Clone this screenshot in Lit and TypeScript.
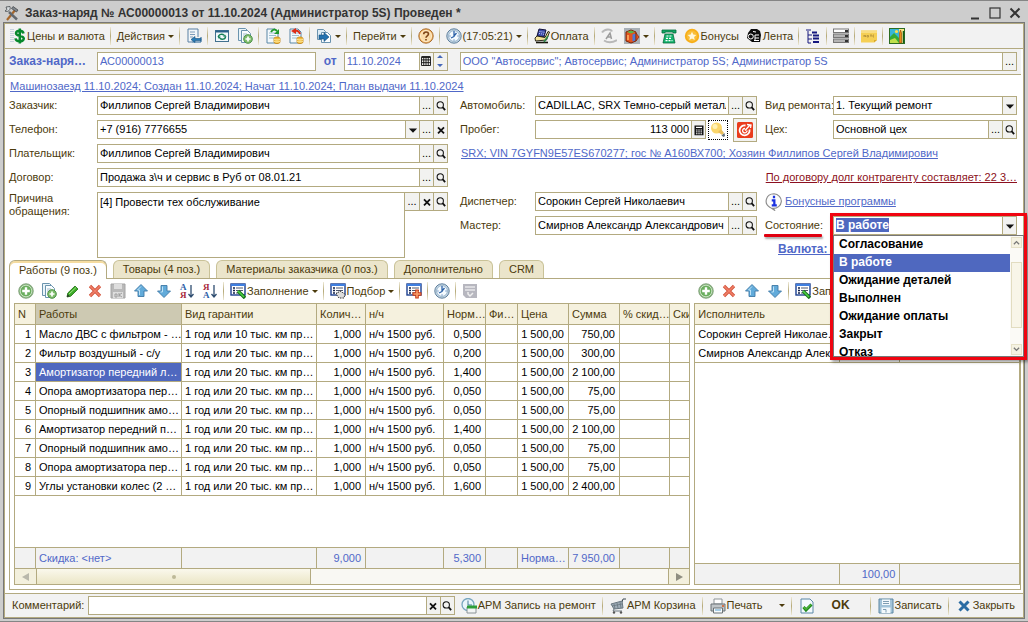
import { LitElement, html, css, svg, nothing } from "lit";
import { customElement, property } from "lit/decorators.js";
import { classMap } from "lit/directives/class-map.js";

const listLines = svg`
  <rect x="1" y="1" width="14" height="11" fill="#fff" stroke="#1c3f8f" stroke-width="1.4"/>
  <rect x="1" y="1" width="14" height="2" fill="#3f7fe0"/>
  <path d="M3 5h2M3 7.5h2M3 10h2" stroke="#10204a" stroke-width="1.4"/>
  <path d="M6 5h7M6 7.5h7M6 10h5" stroke="#50586c" stroke-width="1.1"/>`;
const sheet = svg`
  <path d="M2 1h8l3 3v11H2z" fill="#f4f9fc" stroke="#5a87a6"/>
  <path d="M4 5h6M4 7.500h7M4 10h6" stroke="#9dbdd0"/>`;
const clockFace = svg`
  <circle cx="8" cy="8" r="7.200" fill="#c8d8e6" stroke="#5d7f9c"/>
  <circle cx="8" cy="8" r="5.400" fill="#f5fbff" stroke="#86a7c0" stroke-width=".8"/>
  <path d="M8 3v6M8 8.500L5 10M8 8l2.500-3" stroke="#2d62a8" stroke-width="1.300" fill="none"/>
  <path d="M12.500 8h-1M3.500 8h1M8 12.500v-1" stroke="#2d62a8"/>`;
const coins = svg`
  <path d="M9 10.500c0-2 6-2 6 0v3.500c0 2-6 2-6 0z" fill="#f2b93b" stroke="#c58512" stroke-width=".8"/>
  <path d="M9 11c1 1.300 5 1.300 6 0M9 13c1 1.300 5 1.300 6 0" stroke="#fff0a8" fill="none"/>`;

const icons: Record<string, unknown> = {
  tools: svg`
    <path d="M3 15L12 4" stroke="#a8672a" stroke-width="2.200"/>
    <path d="M9 1.500l5 3.500-1.500 2-5-3.500z" fill="#7f868c" stroke="#3b3f43" stroke-width=".7"/>
    <path d="M5 7l8 7.500" stroke="#62686e" stroke-width="2.400"/>
    <path d="M6 1.500C7 5 4 7.500 1 6l2-1.500L2 2z" fill="#d9dee2" stroke="#44494d" stroke-width=".8"/>`,
  prices: svg`
    <path d="M1 1v14M3 1v14" stroke="#9cb4c8" stroke-dasharray="1 1"/>
    <path d="M13.500 5.500C13 1.800 6 2 6 5.200c0 3.300 7.800 2 7.800 5.300C13.800 14.200 6 14.200 5.500 10.300M9.800.500v15" stroke="#06882c" stroke-width="2.500" fill="none"/>`,
  listIn: svg`
    <path d="M2 1h10v8M2 1v13h4" fill="#f2f7fb" stroke="#5b80a3"/>
    <path d="M4 4h5M4 6.500h5M4 9h3" stroke="#7c9cba"/>
    <path d="M15 14H6M15 9v5" stroke="#1c5f94" fill="none"/>
    <path d="M5 11.500l4-3v2h6v2H9v2z" fill="#2a7db8" stroke="#14517f" stroke-width=".6"/>`,
  refresh: svg`
    <rect x="1.500" y="2.500" width="13" height="11" fill="#f3f8fb" stroke="#42718f"/>
    <path d="M1.500 3.500h13" stroke="#2b6289" stroke-width="2"/>
    <path d="M4.500 9c0-3 4-3.500 5.500-1.700M11.500 8.500c0 3-4 3.500-5.500 1.700" stroke="#168056" stroke-width="1.400" fill="none"/>
    <path d="M12.500 8.800L9 8.500l2-2zM3.500 8.500l3.500.300-2 2.200z" fill="#168056"/>`,
  copyAdd: svg`
    <path d="M1.500.500h7l2 2v10h-9z" fill="#eaf4f9" stroke="#6b94ae"/>
    <path d="M4.500 2.500h6l3 3v9h-9z" fill="#fafdff" stroke="#6b94ae"/>
    <path d="M6 6h4M6 8h3" stroke="#a3bccb"/>
    <circle cx="11" cy="11" r="4.300" fill="#7fbd6c" stroke="#4d9248"/>
    <path d="M11 8.500v5M8.500 11h5" stroke="#fff" stroke-width="1.700"/>`,
  docIn: svg`${sheet}${coins}<path d="M6 4c2-3 4-3 6-1" stroke="#1f9a2c" stroke-width="2" fill="none"/><path d="M14 1v5H9z" fill="#1f9a2c"/>`,
  docOut: svg`${sheet}${coins}<path d="M12 6c-1-3-3-3.500-5-3" stroke="#dc2d18" stroke-width="2" fill="none"/><path d="M3 3l5-3v6z" fill="#dc2d18"/>`,
  goto: svg`
    <path d="M1.500 1.500h6l2 2v8h-8z" fill="#dcebf5" stroke="#6a92ae"/>
    <path d="M5.500 4.500h6l3 3v7h-9z" fill="#fafdff" stroke="#6a92ae"/>
    <path d="M3 7h5V4.500L13 9l-5 4.500V11H3z" fill="#2472b0" stroke="#164e7c" stroke-width=".6"/>`,
  help: svg`
    <circle cx="8" cy="8" r="7.200" fill="#f4b765" stroke="#a86e33"/>
    <circle cx="8" cy="8" r="5.600" fill="#fbdca9" stroke="#fff1d6" stroke-width=".8"/>
    <path d="M5.700 6.300c0-3 4.800-3 4.800-.300C10.500 8 8 7.800 8 9.800M8 11v1.600" stroke="#80471a" stroke-width="1.600" fill="none"/>`,
  clock: clockFace,
  cash: svg`
    <path d="M5 1l7 1-2 7-7-1z" fill="#3a49a8" stroke="#14143c"/>
    <path d="M5.500 3.500l5 .8M5 5.500l5 .8" stroke="#c9d4ff" stroke-dasharray="1 1"/>
    <path d="M1 10l2-2 8 1.500 3-6 1.500.500-3 8-11 1z" fill="#f3e39a" stroke="#17150c" stroke-width=".9"/>
    <path d="M2 14.500h12" stroke="#17150c" stroke-width="1.600"/>
    <path d="M10 14l4-6" stroke="#2d8748" stroke-width="1.500"/>`,
  fontGray: svg`
    <path d="M1 4.500c3-4 9-3.500 10-1M3 12.500c4 2.500 9 2 13-.500" stroke="#b8b8b8" stroke-width="2" fill="none"/>
    <path d="M5 11l4-6 1.500 6M6.500 9h4" stroke="#9c9c9c" stroke-width="1.500" fill="none"/>`,
  book: svg`
    <rect width="16" height="16" fill="#a9b0b6"/>
    <path d="M2 4l5-2 5 2v9l-5 2-5-2z" fill="#e2541e" stroke="#7c2508"/>
    <path d="M3 4l4-1.500L11 4 7 5.500z" fill="#54b84a"/>
    <path d="M8.500 6.500v7l3-1V5.500z" fill="#4b79d6"/><path d="M4 7v5" stroke="#ffb469" stroke-width="1.500"/>
    <path d="M12 5l3 4-3 4z" fill="#e2541e" stroke="#7c2508" stroke-width=".7"/>`,
  phone: svg`
    <path d="M1 5V2h14v3h-3V4H4v1z" fill="#12a865" stroke="#056b3b" stroke-width=".8"/>
    <path d="M4 6h8l2 9H2z" fill="#15b36d" stroke="#056b3b" stroke-width=".8"/>
    <path d="M5.500 8h5M5 10.300h6M4.500 12.700h7" stroke="#fff" stroke-width="1.200" stroke-dasharray="2 1"/>`,
  star: svg`
    <circle cx="8" cy="8" r="7.200" fill="#f7ae18"/><circle cx="8" cy="8" r="5.400" fill="#f9bd38"/>
    <path d="M8 3.800l1.300 2.800 3 .300-2.200 2.100.600 3L8 10.500 5.300 12l.600-3L3.700 6.900l3-.300z" fill="#fff7dc"/>`,
  tape: svg`
    <path d="M5 1h6l3 2 1 4-1 7H6l-5-4 1-5z" fill="#0c0c0c"/>
    <circle cx="4.800" cy="8.500" r="2.500" fill="none" stroke="#fff"/>
    <path d="M9 7h4M9 10h4M8 12.500h5M9 7v5M7 3.500l3 .5" stroke="#fff"/>`,
  tree: svg`
    <path d="M1 2h5M3 3v12h3M3 7h4M3 11h4" stroke="#16187e" fill="none"/>
    <path d="M7 4.500h5M8 7.500h6M8 10.500h6M8 14h6" stroke="#16187e" stroke-width="2"/>`,
  rows: svg`
    <rect x=".5" y="1" width="15" height="3.500" fill="#fff" stroke="#777"/><rect x=".5" y="6" width="15" height="3.500" fill="#b4b4b4" stroke="#777"/><rect x=".5" y="11" width="15" height="3.500" fill="#b4b4b4" stroke="#777"/>
    <path d="M12 2h3v2h-3zM12 7h3v2h-3zM12 12h3v2h-3z" fill="#333"/>`,
  note: svg`
    <path d="M0 2.500h16v9.500l-3 2.500H0z" fill="#f5cf54"/><path d="M0 2.500h16v2.500H0z" fill="#f8dd82"/><path d="M16 12l-3 2.500V12z" fill="#d9a92c"/>
    <path d="M3 9V7l1.500 2V7M6 7.500h1.500v1.500H6zM9 7h2M10 7v2M13 7h-1v2h1" stroke="#a98638" stroke-width=".7" fill="none"/>`,
  picture: svg`
    <rect x=".5" y=".5" width="15" height="15" fill="#38b6d8" stroke="#2c6c20"/>
    <path d="M1 9l4-4 5 5v5H1z" fill="#36a936"/><path d="M1 12l5-2 4 5H1z" fill="#bfe04a"/>
    <circle cx="7.500" cy="3.500" r="1.600" fill="#ffe048"/><path d="M10 1h5v14h-5z" fill="#f8e88a"/><path d="M10.500 15V5l1-3 1 3v10z" fill="#ef8a14" stroke="#8a3f06" stroke-width=".6"/><path d="M14.500 15V3" stroke="#135c1d" stroke-width="1.500"/>`,
  add: svg`
    <circle cx="8" cy="8" r="7.300" fill="#88b47e" stroke="#7a9c74" stroke-width=".8"/>
    <circle cx="8" cy="8" r="5.800" fill="#6aae5e" stroke="#cfe6c9" stroke-width=".9"/>
    <path d="M8 4.200v7.600M4.200 8h7.600" stroke="#fff" stroke-width="2.400"/>`,
  edit: svg`
    <path d="M3 14l.800-4L11 3l3 3-7.200 7.200z" fill="#3cab27" stroke="#1e6e12" stroke-width=".8"/>
    <path d="M5 11l7-6.500" stroke="#a1e488"/><path d="M3 14l.700-2.800 2 2.100z" fill="#2b2b2b"/>`,
  del: svg`<path d="M3 3l10 10M13 3L3 13" stroke="#d0543c" stroke-width="3.200"/><path d="M3 3l10 10M13 3L3 13" stroke="#f17f68" stroke-width="1.600"/>`,
  saveGray: svg`
    <path d="M1 1h14v14H1z" fill="#b9b9b9" stroke="#a4a4a4"/><path d="M4 1h8v5H4zM3 9h10v6H3z" fill="#dedede"/><path d="M5 11h2v3H5zM9 10v4M9 12l3-2M9 12l3 2" stroke="#9e9e9e" fill="none"/>`,
  up: svg`<path d="M8 1.500l6.500 6.500h-3.500v5.500H5V8H1.500z" fill="#62abda" stroke="#3f79a6" stroke-width=".9"/><path d="M8 3.500L4.500 7H6.500v5" stroke="#bfe2f6" fill="none"/>`,
  down: svg`<path d="M8 14.500L14.500 8H11V2.500H5V8H1.500z" fill="#62abda" stroke="#3f79a6" stroke-width=".9"/><path d="M6.500 3.500V9H4.500" stroke="#bfe2f6" fill="none"/>`,
  sortAsc: svg`
    <text x="1" y="7" font-family="Liberation Serif, serif" font-size="9" font-weight="700" fill="#2d5fa8">А</text>
    <text x="1" y="15" font-family="Liberation Serif, serif" font-size="9" font-weight="700" fill="#a8283c">Я</text>
    <path d="M12 2v12M9.500 11l2.500 3 2.500-3" stroke="#2f4d70" stroke-width="1.300" fill="none"/>`,
  sortDesc: svg`
    <text x="1" y="7" font-family="Liberation Serif, serif" font-size="9" font-weight="700" fill="#a8283c">Я</text>
    <text x="1" y="15" font-family="Liberation Serif, serif" font-size="9" font-weight="700" fill="#2d5fa8">А</text>
    <path d="M12 2v12M9.500 11l2.500 3 2.500-3" stroke="#2f4d70" stroke-width="1.300" fill="none"/>`,
  fill: svg`${listLines}<path d="M8 8l7 7" stroke="#176e1b" stroke-width="3.400"/><path d="M8 8l6 6" stroke="#4cd345" stroke-width="1.600"/>`,
  pick: svg`${listLines}<path d="M6 11l4-3 5 3-1 4H9z" fill="#ddd" stroke="#333" stroke-dasharray="1.500 1"/>`,
  listAdd: svg`${listLines}<path d="M11 6.500v9M6.500 11h9" stroke="#c93a17" stroke-width="3.600"/><path d="M11 7.500v7M7.500 11h7" stroke="#f8a06c" stroke-width="1.600"/>`,
  listGray: svg`<path d="M1 1h14v14H4l-3-3z" fill="#b7b7bf"/><path d="M3 4h10M3 7h10" stroke="#e7e7ea" stroke-width="1.500"/><path d="M6 9v2l2 2 3-3" stroke="#efefef" stroke-width="1.500" fill="none"/>`,
  bulb: svg`
    <circle cx="6.500" cy="6" r="5.500" fill="#fbd66a"/><circle cx="5" cy="4.500" r="2.500" fill="#fff1b4"/>
    <path d="M8 10l3-3 3 4-2 2z" fill="#e9bd5d"/><path d="M11.500 13.500l3-2.500.500 3-1.500 1z" fill="#64707a"/>`,
  target: svg`
    <rect width="16" height="16" rx="1.500" fill="#ea3c1c"/>
    <path d="M12.500 7.500A5 5 0 1 1 8.500 3.500" stroke="#fff" stroke-width="1.800" fill="none"/>
    <path d="M10 8.500A2.200 2.200 0 1 1 8 6.500M8 8.500l5-5.500M10 2.500L14 3l-.500 3" stroke="#fff" stroke-width="1.300" fill="none"/>`,
  info: svg`
    <path d="M8 .700a7 6.500 0 1 1-1 13L9 15.700 4.500 12.800A7 6.500 0 0 1 8 .700z" fill="#fcfcfc" stroke="#8a8a8a"/>
    <path d="M8 2.500v2.200M6 6.500h2.300V11M6 11h4.500" stroke="#1a31e0" stroke-width="2" fill="none"/>`,
  search: svg`<circle cx="7" cy="6.500" r="4.200" fill="none" stroke="#111" stroke-width="1.400"/><path d="M10 9.500l3.500 4" stroke="#111" stroke-width="2.400"/>`,
  clear: svg`<path d="M4 4.500l8 8M12 4.500l-8 8" stroke="#111" stroke-width="2.400"/>`,
  drop: svg`<path d="M2.500 6h11L8 11.500z" fill="#111"/>`,
  calendar: svg`<path d="M2 3h12v11H2zM2 6.500h12M2 10.200h12M5 3v11M8 3v11M11 3v11" stroke="#111" stroke-width="1.200" fill="none"/><path d="M2 2.500h12" stroke="#111" stroke-width="2"/>`,
  calc: svg`<path d="M2 2h12v13H2z" fill="#111"/><path d="M4 4.500h8" stroke="#fff" stroke-width="1.600"/><path d="M4 8h8M4 10.500h8M4 13h8" stroke="#fff" stroke-width="1.300" stroke-dasharray="2 1"/>`,
  spin: svg`<path d="M8 0l4 4H4zM8 16l4-4H4z" fill="#4668b8"/>`,
  minimize: svg`<path d="M4 13.500h8" stroke="#333" stroke-width="2"/>`,
  maximize: svg`<rect x="3" y="3" width="10" height="10" fill="none" stroke="#333" stroke-width="1.200"/>`,
  close: svg`<path d="M3.500 3.500l9 9M12.500 3.500l-9 9" stroke="#333" stroke-width="2"/>`,
  armClock: svg`
    <circle cx="7" cy="6.500" r="6" fill="#eaf5fa" stroke="#78a6bf" stroke-width="1.300"/><path d="M7 2.500V7h4" stroke="#477b96" fill="none"/>
    <path d="M6 9h9v6H6z" fill="#f3f5f5" stroke="#8a9296"/><path d="M6 7.500h10v3H6z" fill="#2e9e38"/>`,
  cart: svg`
    <path d="M12 4l1-3h3" stroke="#3f4a52" fill="none"/>
    <path d="M1 6l11-3 1 7-9 1z" fill="#9eabb6" stroke="#6a7780"/>
    <path d="M4 6l1 5M7 5l1 5M10 4l1 6M2 8l10-2" stroke="#6a7780" stroke-width=".8"/>
    <path d="M4 11l-1 2h9" stroke="#6a7780" fill="none"/><circle cx="4" cy="14.500" r="1.200" fill="#555"/><circle cx="11" cy="14.500" r="1.200" fill="#555"/>`,
  printer: svg`
    <path d="M4 1h8v5H4z" fill="#fff" stroke="#8d9498"/><path d="M1 6h14v7H1z" fill="#c0c5c8" stroke="#6b7276"/>
    <path d="M3.500 10h9v5h-9z" fill="#f7fafc" stroke="#6b7276"/><path d="M5 12h6" stroke="#58a0cf"/><circle cx="13" cy="8" r="1" fill="#d85a27"/>`,
  check: svg`<path d="M2 1h9l3 3v11H2z" fill="#f3f9fc" stroke="#5a87a6"/><path d="M4.500 9l2.500 3 5.500-5.500" stroke="#1f8a1c" stroke-width="3" fill="none"/><path d="M4.500 9l2.500 2.500 5-5" stroke="#6cd148" stroke-width="1" fill="none"/>`,
  floppy: svg`<path d="M1 1h14v14H1z" fill="#a3c3d8" stroke="#5c86a2"/><path d="M4 1.500h8V7H4zM3.500 9.500h9V15h-9z" fill="#f4f9fc"/><path d="M5 3.500h6M5 5.500h6M5 11.500h3v3" stroke="#7f9db2" fill="none"/>`,
  closeBlue: svg`<path d="M3.500 3.500l9 9M12.500 3.500l-9 9" stroke="#2b6ca3" stroke-width="3"/>`,
};

const icon = (name: string, cls = "") =>
  html`<svg class="icon ${cls}" viewBox="0 0 16 16" aria-hidden="true">${icons[name]}</svg>`;

interface Tool { icon?: string; text?: string; menu?: boolean; sep?: boolean; strong?: boolean; wide?: boolean; title?: string }
const sep: Tool = { sep: true };

const shared = css`
  * { box-sizing: border-box; }
  button, input, select, textarea { font: inherit; color: inherit; margin: 0; padding: 0; border: 0; border-radius: 0; background: none; outline: 0; }
  .icon { display: block; width: 16px; height: 16px; flex: none; }
`;

@customElement("tool-strip")
class ToolStrip extends LitElement {
  @property({ attribute: false }) items: Tool[] = [];
  static styles = [shared, css`
    :host { display: flex; align-items: center; min-width: 0; height: 24px; color: #4c3b0c; }
    button { display: flex; align-items: center; gap: 1px; padding: 0 3px 0 4px; height: 22px; white-space: nowrap; flex: none; }
    .sep { flex: none; width: 1px; height: 18px; margin: 0 var(--sep-gap, 2px); background: linear-gradient(#eee9d6, #b5a978, #eee9d6); }
    .arrow { margin-left: 2px; border: 3px solid transparent; border-top-color: #4c3b0c; border-bottom: 0; }
    .wide { padding: 0 17px 0 14px; }
    .far { margin-left: 15px; }
    .strong { font-weight: 700; font-size: 12px; }
  `];
  render() {
    return this.items.map((t) => t.sep
      ? html`<span class="sep"></span>`
      : html`<button type="button" class=${classMap({ strong: !!t.strong, wide: !!t.strong })} aria-label=${t.text ?? t.title ?? t.icon ?? ""}>
          ${t.icon ? icon(t.icon) : nothing}${t.text ? html`<span>${t.text}</span>` : nothing}
          ${t.menu ? html`<span class=${classMap({ arrow: true, far: !!t.wide })}></span>` : nothing}
        </button>`);
  }
}

@customElement("entry-field")
class EntryField extends LitElement {
  @property() value = "";
  @property() label = "";
  @property() tools = "";
  @property() tone = "";
  @property() kind = "input";
  static styles = [shared, css`
    :host { display: flex; min-width: 0; height: 19px; color: #000; }
    .box { display: flex; flex: 1; min-width: 0; height: 100%; border: 1px solid #b3aa80; background: #fff; }
    input, select { flex: 1; min-width: 0; width: 100%; padding: 0 2px; appearance: none; }
    .blue { color: #5068c8; }
    .num { text-align: right; }
    .tool { display: grid; place-items: center; flex: none; width: 14px; border-left: 1px solid #b3aa80; background: #f2f2f0; color: #000; line-height: 11px; }
    .tool .icon { width: 12px; height: 12px; }
    :host([kind="area"]) { height: 66px; align-items: flex-start; }
    textarea { flex: 1; min-width: 0; padding: 3px 2px; resize: none; overflow: hidden; line-height: 13px; }
    .side { display: flex; height: 19px; border: 1px solid #b3aa80; border-left: 0; }
    .side .tool:first-child { border-left: 0; }
  `];
  private buttons() {
    return this.tools.split(" ").filter(Boolean).map((n) =>
      html`<button type="button" class="tool" aria-label=${n}>${n === "more" ? "..." : icon(n)}</button>`);
  }
  render() {
    if (this.kind === "area") {
      return html`<div class="box"><textarea aria-label=${this.label} .value=${this.value}></textarea></div>
        <div class="side">${this.buttons()}</div>`;
    }
    return html`<div class="box">
      ${this.kind === "select"
        ? html`<select aria-label=${this.label}><option>${this.value}</option></select>`
        : html`<input class=${this.tone} aria-label=${this.label} .value=${this.value}>`}
      ${this.buttons()}</div>`;
  }
}

interface Col { name: string; width?: number; num?: boolean; active?: boolean }

@customElement("data-grid")
class DataGrid extends LitElement {
  @property({ attribute: false }) cols: Col[] = [];
  @property({ attribute: false }) rows: string[][] = [];
  @property({ attribute: false }) totals: string[] = [];
  @property({ type: Boolean }) scroller = false;
  @property({ attribute: false }) mark: number[] = [];
  static styles = [shared, css`
    :host { display: flex; flex-direction: column; flex: 1; min-width: 0; min-height: 0; border: 1px solid #b3aa80; background: #fff; color: #000; }
    table { width: 100%; table-layout: fixed; border-collapse: separate; border-spacing: 0; }
    th, td { height: 19px; padding: 0 3px; border: 0 solid #b3aa80; border-width: 0 1px 1px 0; overflow: hidden; white-space: nowrap; text-align: left; font-weight: 400; }
    th:last-child, td:last-child { border-right: 0; }
    th { height: 21px; background: #f5f1de; color: #4c3b0c; }
    .active { background: #cdc9b2; }
    .num { text-align: right; padding: 0 4px 0 0; }
    .mark { background: #4f68bf; color: #fff; }
    .space { flex: 1; }
    .totals td { height: 21px; border-width: 1px 1px 0 0; background: #f2f2f2; color: #5068c8; }
    .scroll { display: flex; height: 16px; border-top: 1px solid #b3aa80; background: #f9f8f3; }
    .end { display: grid; place-items: center; width: 21px; background: #f3f0dd; color: #a9a794; }
    .end .icon { width: 8px; height: 8px; }
    .thumb { display: grid; place-items: center; width: 275px; border: 0 solid #b3aa80; border-width: 0 1px; background: linear-gradient(#faf8ec, #ebe6c6); }
    .dot { width: 4px; height: 4px; border-radius: 2px; background: #bdb998; }
    .track { flex: 1; }
    .right { border-left: 1px solid #b3aa80; }
  `];
  private group() {
    return html`<colgroup>${this.cols.map((c) => c.width ? html`<col style="width:${c.width}px">` : html`<col>`)}</colgroup>`;
  }
  render() {
    return html`
      <table>${this.group()}
        <thead><tr>${this.cols.map((c) => html`<th class=${classMap({ active: !!c.active })}>${c.name}</th>`)}</tr></thead>
        <tbody>${this.rows.map((r, y) => html`<tr>${this.cols.map((c, x) =>
          html`<td class=${classMap({ num: !!c.num, mark: this.mark[0] === y && this.mark[1] === x })}>${r[x] ?? ""}</td>`)}</tr>`)}</tbody>
      </table>
      <div class="space"></div>
      <table class="totals">${this.group()}
        <tbody><tr>${this.cols.map((c, x) => html`<td class=${classMap({ num: !!c.num && this.totals[x] !== "Норма…" })}>${this.totals[x] ?? ""}</td>`)}</tr></tbody>
      </table>
      ${this.scroller ? html`<div class="scroll">
        <button class="end" aria-label="Влево"><svg class="icon" viewBox="0 0 8 8"><path d="M7 0v8L0 4z" fill="#b9b8ab"/></svg></button>
        <div class="thumb"><span class="dot"></span></div><div class="track"></div>
        <button class="end right" aria-label="Вправо"><svg class="icon" viewBox="0 0 8 8"><path d="M1 0v8l7-4z" fill="#8f8e80"/></svg></button>
      </div>` : nothing}`;
  }
}

const mainTools: Tool[] = [
  { icon: "prices", text: "Цены и валюта" }, sep, { text: "Действия", menu: true }, sep,
  { icon: "listIn" }, sep, { icon: "refresh" }, { icon: "copyAdd" }, sep, { icon: "docIn" }, { icon: "docOut" }, sep,
  { icon: "goto", menu: true }, sep, { text: "Перейти", menu: true }, sep, { icon: "help" }, sep,
  { icon: "clock", text: "(17:05:21)", menu: true }, sep, { icon: "cash", text: "Оплата" }, sep,
  { icon: "fontGray" }, { icon: "book", menu: true }, sep, { icon: "phone" }, { icon: "star", text: "Бонусы" },
  { icon: "tape", text: "Лента" }, sep, { icon: "tree" }, sep, { icon: "rows" }, sep, { icon: "note" }, sep, { icon: "picture" },
];
const workTools: Tool[] = [
  { icon: "add" }, { icon: "copyAdd" }, { icon: "edit" }, { icon: "del" }, { icon: "saveGray" }, { icon: "up" }, { icon: "down" },
  { icon: "sortAsc" }, { icon: "sortDesc" }, sep, { icon: "fill", text: "Заполнение", menu: true }, sep,
  { icon: "pick", text: "Подбор", menu: true }, sep, { icon: "listAdd" }, sep, { icon: "clock" }, sep, { icon: "listGray" },
];
const staffTools: Tool[] = [
  { icon: "add" }, { icon: "del" }, { icon: "up" }, { icon: "down" }, sep, { icon: "fill", text: "Заполнение" },
];
const footTools: Tool[] = [
  { icon: "armClock", text: "АРМ Запись на ремонт" }, sep, { icon: "cart", text: "АРМ Корзина" }, sep,
  { icon: "printer", text: "Печать", menu: true, wide: true }, sep, { icon: "check", title: "Провести" }, { text: "OK", strong: true }, sep,
  { icon: "floppy", text: "Записать" }, sep, { icon: "closeBlue", text: "Закрыть" },
];
const workCols: Col[] = [
  { name: "N", width: 21, num: true }, { name: "Работы", width: 146, active: true }, { name: "Вид гарантии", width: 135 },
  { name: "Колич…", width: 49, num: true }, { name: "н/ч", width: 78 }, { name: "Норм…", width: 42, num: true },
  { name: "Фи…", width: 32 }, { name: "Цена", width: 51, num: true }, { name: "Сумма", width: 51, num: true },
  { name: "% скид…", width: 50 }, { name: "Ски" },
];
const work = (n: number, name: string, norm: string, sum: string, km = "20") =>
  [`${n}`, name, `1 год или ${km} тыс. км пр…`, "1,000", "н/ч 1500 руб.", norm, "", "1 500,00", sum];
const works = [
  work(1, "Масло ДВС с фильтром - …", "0,500", "750,00", "10"),
  work(2, "Фильтр воздушный - с/у", "0,200", "300,00"),
  work(3, "Амортизатор передний л…", "1,400", "2 100,00"),
  work(4, "Опора амортизатора пер…", "0,050", "75,00"),
  work(5, "Опорный подшипник амо…", "0,050", "75,00"),
  work(6, "Амортизатор передний п…", "1,400", "2 100,00"),
  work(7, "Опорный подшипник амо…", "0,050", "75,00"),
  work(8, "Опора амортизатора пер…", "0,050", "75,00"),
  work(9, "Углы установки колес (2 …", "1,600", "2 400,00"),
];
const workTotals = ["", "Скидка: <нет>", "", "9,000", "", "5,300", "", "Норма…", "7 950,00"];
const staffCols: Col[] = [{ name: "Исполнитель", width: 145 }, { name: "", width: 60, num: true }, { name: "" }];
const staff = [["Сорокин Сергей Николае…"], ["Смирнов Александр Алек…"]];
const states = ["Согласование", "В работе", "Ожидание деталей", "Выполнен", "Ожидание оплаты", "Закрыт", "Отказ"];
const tabs = ["Работы (9 поз.)", "Товары (4 поз.)", "Материалы заказчика (0 поз.)", "Дополнительно", "CRM"];

@customElement("app-root")
class AppRoot extends LitElement {
  static styles = [shared, css`
    :host { display: flex; flex-direction: column; min-height: 100vh; padding: 0 3px 2px; border-top: 1px solid #858585; border-bottom: 1px solid #858585; background: #cdcdcd; box-sizing: border-box; font: 11px/13px "Liberation Sans", Arial, sans-serif; color: #4c3b0c; }
    .title { display: flex; align-items: center; height: 21px; padding: 2px 2px 0 1px; color: #333; }
    h1 { flex: 1; margin: 0 0 0 5px; font-size: 12px; line-height: 16px; white-space: nowrap; overflow: hidden; }
    .title button { padding: 0 0 0 4px; }
    .frame { flex: 1; display: flex; flex-direction: column; border: 1px solid #777; background: #fff; min-width: 0; }
    .inner { flex: 1; display: flex; flex-direction: column; border: 1px solid #b3aa80; min-width: 0; }
    .bar { padding-left: 1px; border-bottom: 1px solid #b3aa80; background: #f2f2f2; }
    .head { display: flex; align-items: center; height: 26px; margin-right: 2px; padding: 0 4px 1px; border-bottom: 1px solid #b3aa80; background: #f2f2f2; color: #5068c8; font-weight: 700; }
    .head label { width: 88px; font-size: 12px; }
    .head entry-field { font-weight: 400; }
    .head .from { width: auto; margin: 0 7px 0 8px; }
    .number { flex: 219; }
    .date { width: 104px; margin-right: 12px; }
    .org { flex: 558; }
    a { color: #5068c8; text-decoration: underline; white-space: nowrap; }
    .dates { padding: 5px 0 3px 5px; }
    form { display: grid; grid-template-columns: 88px minmax(0, 363fr) 75px minmax(0, 230fr) 68px minmax(0, 184fr); grid-auto-rows: 19px; row-gap: 5px; padding: 0 6px 0 4px; align-items: center; }
    form label { white-space: nowrap; }
    .f1 { grid-column: 2; margin-right: 12px; }
    .l1 { grid-column: 1; }
    .l2 { grid-column: 3; }
    .f2 { grid-column: 4; margin-right: 8px; }
    .l3 { grid-column: 5; }
    .f3 { grid-column: 6; }
    .r1 { grid-row: 1; } .r2 { grid-row: 2; } .r3 { grid-row: 3; } .r4 { grid-row: 4; } .r5 { grid-row: 5; } .r6 { grid-row: 6; } .r7 { grid-row: 7; }
    .tall { grid-row: 5 / span 3; align-self: start; }
    .run { display: flex; align-items: center; gap: 5px; height: 19px; }
    .run entry-field { flex: 1; margin-right: -3px; }
    .lamp { padding: 1px; border: 1px dotted #000; }
    .red { padding: 3px; border: 1px solid #b3aa80; background: #f2f2f0; }
    .car { grid-column: 3 / span 4; margin-left: 1px; }
    .debt { grid-column: 4 / span 3; justify-self: end; color: #8c1020; }
    .bonus { grid-column: 5 / span 2; display: flex; align-items: center; gap: 2px; }
    .bonus .icon { width: 18px; height: 18px; }
    .currency { grid-column: 5 / span 2; margin-left: 13px; font-size: 12px; font-weight: 700; }
    .state-label { position: relative; }
    .state-label::after { content: ""; position: absolute; left: -1px; top: 15px; width: 58px; height: 3px; border-radius: 1px; background: #e00010; box-shadow: 1px 2px 2px #0005; }
    .state { position: relative; height: 19px; display: flex; border: 1px solid #b3aa80; background: #fff; font-weight: 700; font-size: 12px; }
    .state select { appearance: none; field-sizing: content; height: 14px; margin: 1px 2px; line-height: 14px; background: #4f68bf; color: #fff; }
    .state .tool { display: grid; place-items: center; width: 14px; margin-left: auto; border-left: 1px solid #b3aa80; background: #f2f2f0; }
    .tool .icon { width: 12px; height: 12px; }
    .callout { position: absolute; z-index: 4; left: -4px; right: -11px; top: -4px; height: 147px; border: 3px solid #f00410; box-shadow: 2px 2px 3px #0006; pointer-events: none; }
    .popup { position: absolute; z-index: 3; left: -1px; right: -8px; top: 18px; display: flex; height: 122px; border: 1px solid #777; background: #fff; color: #000; overflow: hidden; }
    ul { flex: 1; margin: 0; padding: 0; list-style: none; }
    li { height: 18px; padding-left: 5px; line-height: 17px; white-space: nowrap; }
    .chosen { background: #4f68bf; color: #fff; }
    .bars { display: flex; flex-direction: column; justify-content: space-between; width: 13px; padding: 1px; background: #fbfaf6; }
    .step { display: grid; place-items: center; height: 11px; border: 1px solid #e6e1c8; background: #f5f2e2; }
    .step .icon { width: 7px; height: 7px; }
    .grip { height: 66px; margin-bottom: 3px; border: 1px solid #e2dcc0; background: #f8f5e8; }
    .tabs { display: flex; gap: 6px; margin-top: 1px; padding: 0 4px; }
    .tab { height: 18px; padding: 0 9px; border: 1px solid #c9c298; border-bottom: 0; border-radius: 6px 6px 0 0; background: #ebe5cb; color: #4c3b0c; white-space: nowrap; }
    .tab[aria-selected="true"] { height: 19px; margin-bottom: -1px; border-color: #b3aa80; background: #fff; box-shadow: inset 0 2px #f5dca0; position: relative; }
    .panel { flex: 1; display: grid; grid-template-columns: minmax(0, 677fr) minmax(0, 326fr); gap: 4px; margin: 0 2px 3px 4px; padding: 0 0 4px 4px; border: 1px solid #b3aa80; background: #fff; }
    .pane { display: flex; flex-direction: column; min-width: 0; overflow: hidden; }
    .foot { display: flex; align-items: center; height: 24px; padding: 0 5px 0 7px; border-top: 1px solid #b3aa80; background: #f2f2f2; --sep-gap: 3px; }
    .foot entry-field { flex: 1; margin: 0 2px 0 4px; }
  `];

  render() {
    const field = (label: string, value: string, cls: string, row: number, side: number, tools = "more search", kind = "input") => html`
      <label class="l${side} r${row}">${label}</label>
      <entry-field class="${cls} r${row}" .label=${label} .value=${value} .tools=${tools} kind=${kind}></entry-field>`;
    return html`
      <header class="title">
        ${icon("tools")}<h1>Заказ-наряд № АС00000013 от 11.10.2024 (Администратор 5S) Проведен *</h1>
        <button aria-label="Свернуть">${icon("minimize")}</button><button aria-label="Развернуть">${icon("maximize")}</button><button aria-label="Закрыть окно">${icon("close")}</button>
      </header>
      <div class="frame"><div class="inner">
        <div class="bar"><tool-strip .items=${mainTools}></tool-strip></div>
        <div class="head">
          <label>Заказ-наря…</label>
          <entry-field class="number" label="Номер" value="АС00000013" tone="blue"></entry-field>
          <label class="from">от</label>
          <entry-field class="date" label="Дата" value="11.10.2024" tone="blue" tools="calendar spin"></entry-field>
          <entry-field class="org" label="Организация" value='ООО "Автосервис"; Автосервис; Администратор 5S; Администратор 5S' tone="blue" tools="more"></entry-field>
        </div>
        <div class="dates"><a href="#">Машинозаезд 11.10.2024; Создан 11.10.2024; Начат 11.10.2024; План выдачи 11.10.2024</a></div>
        <form>
          ${field("Заказчик:", "Филлипов Сергей Владимирович", "f1", 1, 1)}
          ${field("Телефон:", "+7 (916) 7776655", "f1", 2, 1, "drop more clear")}
          ${field("Плательщик:", "Филлипов Сергей Владимирович", "f1", 3, 1)}
          ${field("Договор:", "Продажа з\\ч и сервис в Руб от 08.01.21", "f1", 4, 1)}
          <label class="l1 tall">Причина<br>обращения:</label>
          <entry-field class="f1 tall" kind="area" label="Причина обращения" value="[4] Провести тех обслуживание" tools="more clear search"></entry-field>
          ${field("Автомобиль:", "CADILLAC, SRX Темно-серый металлик", "f2", 1, 2)}
          <label class="l2 r2">Пробег:</label>
          <div class="f2 r2 run">
            <entry-field label="Пробег" value="113 000" tone="num" tools="calc"></entry-field>
            <button type="button" class="lamp" aria-label="Подсказка">${icon("bulb")}</button>
            <button type="button" class="red" aria-label="Диагностика">${icon("target")}</button>
          </div>
          <a class="car r3" href="#">SRX; VIN 7GYFN9E57ES670277; гос № А160ВХ700; Хозяин Филлипов Сергей Владимирович</a>
          <a class="debt r4" href="#">По договору долг контрагенту составляет: 22 3…</a>
          ${field("Диспетчер:", "Сорокин Сергей Николаевич", "f2", 5, 2)}
          ${field("Мастер:", "Смирнов Александр Александрович", "f2", 6, 2)}
          ${field("Вид ремонта:", "1. Текущий ремонт", "f3", 1, 3, "drop", "select")}
          ${field("Цех:", "Основной цех", "f3", 2, 3)}
          <div class="bonus r5">${icon("info")}<a href="#">Бонусные программы</a></div>
          <label class="l3 r6 state-label" for="state">Состояние:</label>
          <div class="f3 r6 state">
            <select id="state"><option>В работе</option></select>
            <button type="button" class="tool" aria-label="Открыть список">${icon("drop")}</button>
            <div class="popup">
              <ul role="listbox">${states.map((s) => html`<li role="option" class=${classMap({ chosen: s === "В работе" })}>${s}</li>`)}</ul>
              <div class="bars">
                <span class="step"><svg class="icon" viewBox="0 0 8 8"><path d="M1 6l3-3 3 3" stroke="#777" stroke-width="1.500" fill="none"/></svg></span>
                <span class="grip"></span>
                <span class="step"><svg class="icon" viewBox="0 0 8 8"><path d="M1 2l3 3 3-3" stroke="#777" stroke-width="1.500" fill="none"/></svg></span>
              </div>
            </div>
            <div class="callout"></div>
          </div>
          <a class="currency r7" href="#">Валюта:&nbsp;&nbsp;&nbsp;</a>
        </form>
        <div class="tabs" role="tablist">${tabs.map((t, i) => html`<button class="tab" role="tab" aria-selected=${i === 0 ? "true" : "false"}>${t}</button>`)}</div>
        <div class="panel">
          <section class="pane"><tool-strip .items=${workTools}></tool-strip>
            <data-grid .cols=${workCols} .rows=${works} .totals=${workTotals} .mark=${[2, 1]} scroller></data-grid></section>
          <section class="pane"><tool-strip .items=${staffTools}></tool-strip>
            <data-grid .cols=${staffCols} .rows=${staff} .totals=${["", "100,00"]}></data-grid></section>
        </div>
        <footer class="foot">
          <label>Комментарий:</label>
          <entry-field label="Комментарий" tools="clear search"></entry-field>
          <tool-strip .items=${footTools}></tool-strip>
        </footer>
      </div></div>`;
  }
}
